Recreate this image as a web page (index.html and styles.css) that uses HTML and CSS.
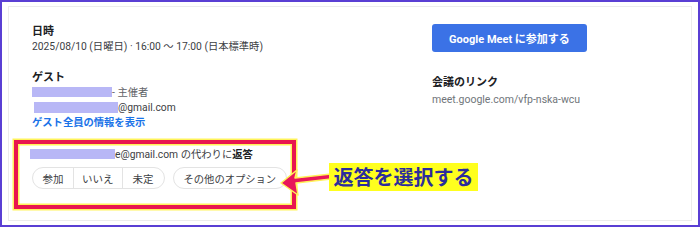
FILE: index.html
```html
<!DOCTYPE html>
<html lang="ja">
<head>
<meta charset="utf-8">
<link rel="stylesheet" href="styles.css">
</head>
<body>
<div class="frame">
  <div class="card">
    <div class="left">
      <section class="sec">
        <div class="label">日時</div>
        <div class="text">2025/08/10 (日曜日) · 16:00 〜 17:00 (日本標準時)</div>
      </section>
      <section class="sec">
        <div class="label">ゲスト</div>
        <div class="text"><span class="blur blur-host"></span><span class="muted">- 主催者</span></div>
        <div class="text"><span class="blur blur-mail"></span>@gmail.com</div>
        <div class="link">ゲスト全員の情報を表示</div>
      </section>
      <section class="sec respond">
        <div class="text"><span class="blur blur-resp"></span>e@gmail.com の代わりに<b class="strong">返答</b></div>
        <div class="btn-row">
          <div class="seg-group">
            <span class="seg">参加</span>
            <span class="seg">いいえ</span>
            <span class="seg">未定</span>
          </div>
          <span class="pill">その他のオプション</span>
        </div>
      </section>
    </div>
    <div class="right">
      <div class="meet-btn">Google Meet に参加する</div>
      <div class="label">会議のリンク</div>
      <div class="url">meet.google.com/vfp-nska-wcu</div>
    </div>
  </div>

  <div class="hl-box"></div>
  <svg class="arrow" width="60" height="34" viewBox="0 0 60 34">
    <polygon points="4,19 20,6 18,14 54,10 54,15 19,19 21,31" fill="#e8175a" stroke="#fff35a" stroke-width="1.5" stroke-linejoin="round"/>
  </svg>
  <div class="callout">返答を選択する</div>
</div>
</body>
</html>
```

FILE: styles.css
```css
* { box-sizing: border-box; }

body {
  margin: 0;
  background: #fff;
  font-family: Roboto, "Noto Sans CJK JP", sans-serif;
}

.frame {
  position: relative;
  width: 700px;
  height: 227px;
  border: 2px solid #5a3fd4;
  background: #fff;
  padding: 4px 6px 4px 6px;
}

.card {
  height: 100%;
  border: 1px solid #ececec;
  display: flex;
  padding: 17px 0 0 23px;
}

.left {
  width: 400px;
  display: flex;
  flex-direction: column;
  gap: 16px;
}

.sec {
  display: flex;
  flex-direction: column;
}

.label {
  font-size: 11px;
  line-height: 15px;
  font-weight: 700;
  color: #202124;
}

.text {
  font-size: 10.3px;
  line-height: 15px;
  color: #3c4043;
  white-space: nowrap;
}

.muted { color: #5f6368; }

.strong { font-weight: 700; color: #202124; }

.link {
  font-size: 10.3px;
  line-height: 15px;
  font-weight: 700;
  color: #1a73e8;
}

.blur {
  display: inline-block;
  vertical-align: middle;
  background: #b8b7f6;
  height: 10px;
  margin-top: -2px;
}

.blur-host { width: 80px; }
.blur-mail { width: 84px; height: 11px; margin-left: 2px; }
.blur-resp { width: 85px; margin-left: -2px; }

.respond { gap: 5px; margin-top: 1px; }

.btn-row {
  display: flex;
  gap: 8px;
}

.seg-group {
  display: flex;
  border: 1px solid #e3e3e3;
  border-radius: 11px;
  height: 22px;
  overflow: hidden;
}

.seg {
  min-width: 40px;
  padding: 0 8px;
  display: flex;
  align-items: center;
  justify-content: center;
  font-size: 10.5px;
  color: #3c4043;
}

.seg + .seg { border-left: 1px solid #e3e3e3; }

.seg:last-child { min-width: 42px; }

.pill {
  display: flex;
  align-items: center;
  height: 22px;
  padding: 0 10px;
  border: 1px solid #e3e3e3;
  border-radius: 11px;
  font-size: 10.3px;
  color: #3c4043;
}

.right {
  display: flex;
  flex-direction: column;
  align-items: flex-start;
}

.meet-btn {
  width: 155px;
  height: 28px;
  border-radius: 3px;
  background: #3b72e6;
  color: #fff;
  font-size: 11px;
  font-weight: 700;
  display: flex;
  align-items: center;
  justify-content: center;
  margin-bottom: 23px;
}

.url {
  margin-top: 2px;
  font-size: 10.5px;
  line-height: 15px;
  color: #70757a;
}

/* annotation overlays */
.hl-box {
  position: absolute;
  left: 12px;
  top: 138px;
  width: 282px;
  height: 69px;
  border: 4px solid #e8164f;
  box-shadow: 0 0 0 1.5px #fff35a, inset 0 0 0 1.5px #fff35a;
}

.arrow {
  position: absolute;
  left: 275px;
  top: 162px;
}

.callout {
  position: absolute;
  left: 327px;
  top: 161px;
  width: 149px;
  height: 28px;
  background: #ffff1e;
  color: #2c2d9c;
  font-family: "Noto Sans CJK JP", sans-serif;
  font-size: 20px;
  font-weight: 700;
  line-height: 28px;
  text-align: center;
}
```
